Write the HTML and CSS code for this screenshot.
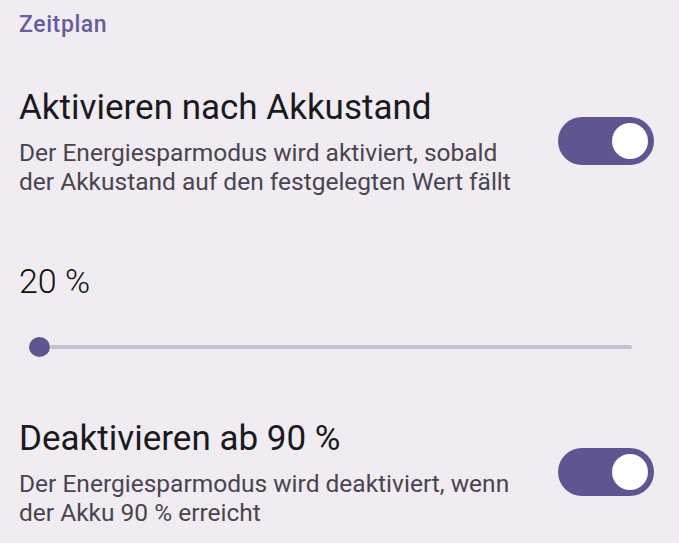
FILE: index.html
```html
<!DOCTYPE html>
<html lang="de">
<head>
<meta charset="utf-8">
<link rel="stylesheet" href="styles.css">
</head>
<body>
<main class="page">
  <h2 class="section-title">Zeitplan</h2>

  <div class="pref-row first">
    <div class="pref-text">
      <div class="pref-title">Aktivieren nach Akkustand</div>
      <div class="pref-summary">Der Energiesparmodus wird aktiviert, sobald der Akkustand auf den festgelegten Wert fällt</div>
    </div>
    <div class="switch"><span class="knob"></span></div>
  </div>

  <div class="slider-block">
    <div class="slider-value">20 %</div>
    <div class="slider">
      <span class="thumb"></span>
      <span class="track"></span>
    </div>
  </div>

  <div class="pref-row second">
    <div class="pref-text">
      <div class="pref-title">Deaktivieren ab 90 %</div>
      <div class="pref-summary">Der Energiesparmodus wird deaktiviert, wenn der Akku 90 % erreicht</div>
    </div>
    <div class="switch"><span class="knob"></span></div>
  </div>
</main>
</body>
</html>
```
FILE: styles.css
```css
html, body {
  margin: 0;
  padding: 0;
  background: #f0ecf2;
}
body {
  font-family: "Roboto", "Noto Sans", sans-serif;
  color: #1c1b1f;
  width: 679px;
  height: 543px;
  overflow: hidden;
}
.page {
  padding: 0 25px 0 19px;
  display: flex;
  flex-direction: column;
}
.section-title {
  margin: 10px 0 0 0;
  font-size: 23px;
  font-weight: 500;
  letter-spacing: 0.6px;
  color: #675d9c;
  line-height: 30px;
}
.pref-row {
  display: flex;
  align-items: center;
  justify-content: space-between;
  gap: 20px;
}
.pref-row.first {
  margin-top: 46px;
}
.pref-row.second {
  margin-top: 60px;
}
.pref-text {
  display: flex;
  flex-direction: column;
}
.pref-title {
  font-size: 35px;
  line-height: 44px;
  color: #1a1a1e;
}
.pref-summary {
  font-size: 24.5px;
  line-height: 29px;
  color: #49454f;
  max-width: 515px;
  margin-top: 8px;
}
.switch {
  flex: none;
  width: 96px;
  height: 48px;
  border-radius: 24px;
  background: #5f5690;
  display: flex;
  align-items: center;
  justify-content: flex-end;
  padding-right: 6px;
  box-sizing: border-box;
}
.knob {
  width: 36px;
  height: 36px;
  border-radius: 50%;
  background: #ffffff;
}
.slider-block {
  margin-top: 65px;
  display: flex;
  flex-direction: column;
}
.slider-value {
  font-size: 34px;
  font-weight: 300;
  line-height: 40px;
  color: #111;
}
.slider {
  margin-top: 36px;
  display: flex;
  align-items: center;
  padding-left: 10px;
  width: 603px;
  height: 20px;
}
.thumb {
  flex: none;
  width: 21px;
  height: 20px;
  border-radius: 50%;
  background: #5f5690;
}
.track {
  flex: 1;
  height: 4px;
  border-radius: 2px;
  background: #c7c0d4;
}
```
